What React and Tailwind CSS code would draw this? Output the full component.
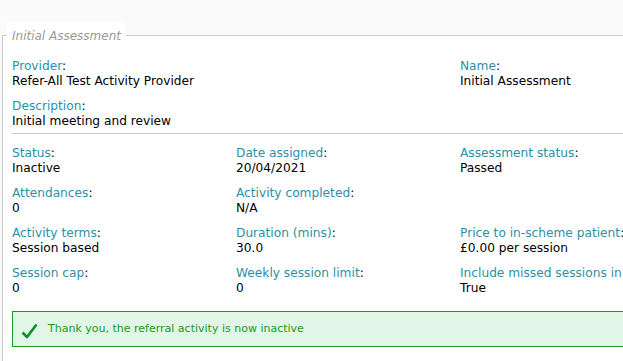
const Field = ({ label, value, mb = "mb-[10px]", className = "" }) => (
  <div className={`${mb} ${className}`}>
    <div className="leading-[15px]">
      <span className="text-[#2b8fab]">{label}</span>:
    </div>
    <div className="leading-[15px] min-h-[15px]">{value}</div>
  </div>
)

export default function App() {
  return (
    <div
      className="w-[623px] h-[361px] overflow-hidden bg-[#fafafa] pt-[22px] pl-[2px] text-[12.2px] text-black"
      style={{ fontFamily: "Verdana, 'DejaVu Sans', sans-serif" }}
    >
      <fieldset className="w-[720px] h-[400px] border border-[#cccccc] bg-white pl-[9px] pr-[9px] pb-4">
        <legend className="ml-[-5px] px-[5px] pt-[7px] pb-[5px] bg-white italic text-[#999999] leading-[14px] text-[12px]">
          Initial Assessment
        </legend>

        <div className="pt-[11px] grid grid-cols-[448px_224px]">
          <Field label="Provider" value="Refer-All Test Activity Provider" />
          <Field label="Name" value="Initial Assessment" />
        </div>
        <Field label="Description" value="Initial meeting and review" mb="mb-[4px]" />

        <div className="border-t border-[#cccccc] mb-[12px]" />

        <div className="grid grid-cols-[224px_224px_224px]">
          <Field label="Status" value="Inactive" />
          <Field label="Date assigned" value="20/04/2021" />
          <Field label="Assessment status" value="Passed" />
          <Field label="Attendances" value="0" />
          <Field label="Activity completed" value="N/A" />
          <div />
          <Field label="Activity terms" value="Session based" />
          <Field label="Duration (mins)" value="30.0" />
          <Field label="Price to in-scheme patient" value="£0.00 per session" />
          <Field label="Session cap" value="0" />
          <Field label="Weekly session limit" value="0" />
          <Field label="Include missed sessions in patient count" value="True" className="whitespace-nowrap" />
        </div>

        <div className="mt-[5px] h-[36px] border border-[#1a9e1a] bg-[#e1f6e6] flex items-center pl-[8px] text-[11px] text-[#1a9a1a]">
          <svg width="17" height="16" viewBox="0 0 17 16" className="mr-[10px] mt-[3px]">
            <path d="M1.5 9.5 L6 14 L15.5 1.5" fill="none" stroke="#0e8f24" strokeWidth="2.6" strokeLinejoin="round" />
          </svg>
          <span>Thank you, the referral activity is now inactive</span>
        </div>
      </fieldset>
    </div>
  )
}
